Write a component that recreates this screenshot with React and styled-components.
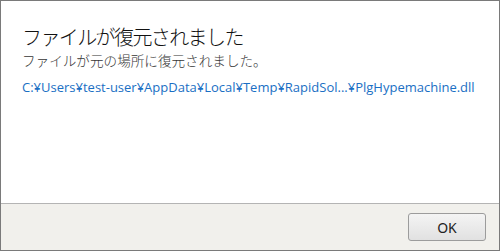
import React from "react";
import styled, { createGlobalStyle } from "styled-components";

const GlobalStyle = createGlobalStyle`
  html, body {
    margin: 0;
    padding: 0;
    background: #ffffff;
  }
`;

const Dialog = styled.div`
  width: 500px;
  height: 251px;
  box-sizing: border-box;
  border: 1px solid #7a7a7a;
  display: flex;
  flex-direction: column;
  background: #ffffff;
  font-family: "Noto Sans CJK JP", "Noto Sans", sans-serif;
`;

const Body = styled.div`
  flex: 1;
  padding: 22px 21px 0 21px;
  display: flex;
  flex-direction: column;
`;

const Title = styled.h1`
  margin: 0;
  font-size: 20px;
  font-weight: 300;
  line-height: 28px;
  letter-spacing: -1.6px;
  color: #111111;
`;

const Message = styled.p`
  margin: 0;
  font-size: 13.6px;
  font-weight: 300;
  line-height: 18px;
  color: #363636;
`;

const PathLink = styled.a`
  margin-top: 10px;
  font-family: "Open Sans", "Noto Sans CJK JP", sans-serif;
  font-size: 13px;
  line-height: 16px;
  color: #1a6fc4;
  text-decoration: none;
  white-space: nowrap;
`;

const Footer = styled.div`
  box-sizing: border-box;
  height: 47px;
  flex: none;
  border-top: 1px solid #b4b4b4;
  background: #f1f0ec;
  display: flex;
  justify-content: flex-end;
  align-items: flex-start;
  padding: 9px 13px 0 0;
`;

const Button = styled.button`
  width: 78px;
  height: 28px;
  border: 1px solid #9c9c9c;
  border-radius: 3px;
  background: linear-gradient(#f4f4f4, #e1e1e1);
  font-family: "Noto Sans", sans-serif;
  font-size: 14px;
  color: #222222;
  padding: 0;
`;

export default function App() {
  return (
    <>
      <GlobalStyle />
      <Dialog>
        <Body>
          <Title>ファイルが復元されました</Title>
          <Message>ファイルが元の場所に復元されました。</Message>
          <PathLink href="#">
            C:¥Users¥test-user¥AppData¥Local¥Temp¥RapidSol...¥PlgHypemachine.dll
          </PathLink>
        </Body>
        <Footer>
          <Button>OK</Button>
        </Footer>
      </Dialog>
    </>
  );
}
